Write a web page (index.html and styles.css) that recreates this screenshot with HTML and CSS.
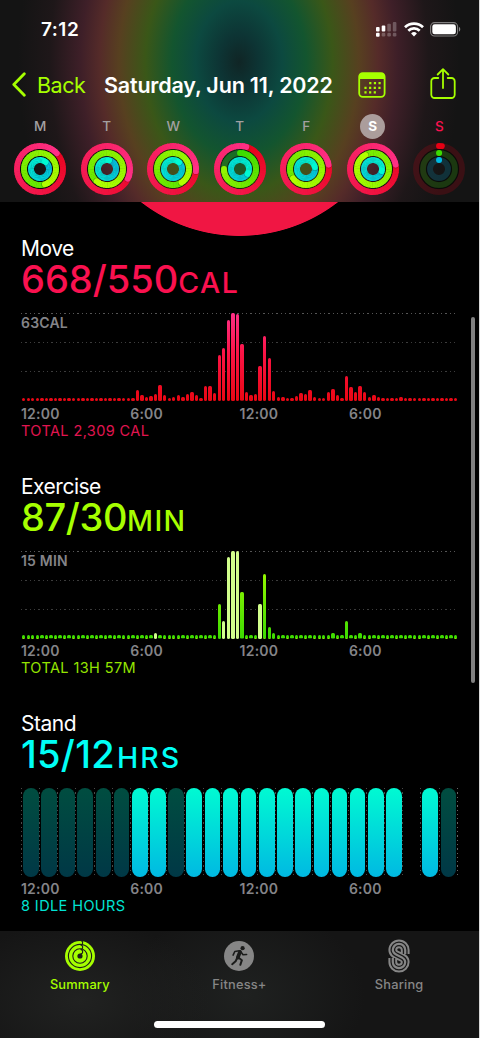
FILE: index.html
```html
<!DOCTYPE html>
<html lang="en">
<head>
    <meta charset="UTF-8">
    <meta name="viewport" content="width=device-width, initial-scale=1.0">
    <title>Activity</title>
    <link rel="stylesheet" href="styles.css">
</head>
<body>
<div class="phone">
    <header class="header">
        <div class="status">
            <span class="time">7:12</span>
            <div class="status-icons">
                <svg class="signal" width="21" height="15" viewBox="0 0 21 15" fill="#fff">
                    <rect x="0" y="5" width="3.6" height="4.4" rx="1"/>
                    <rect x="5.7" y="3.6" width="3.6" height="5.8" rx="1"/>
                    <rect x="11.3" y="1.8" width="3.6" height="7.6" rx="1" opacity=".25"/>
                    <rect x="16.8" y="0" width="3.6" height="9.4" rx="1" opacity=".25"/>
                    <rect x="0" y="10.8" width="3.6" height="4" rx="1"/>
                    <rect x="5.7" y="10.8" width="3.6" height="3.6" rx="1.2" opacity=".25"/>
                    <rect x="11.3" y="10.8" width="3.6" height="3.6" rx="1.2" opacity=".25"/>
                    <rect x="16.8" y="10.8" width="3.6" height="3.6" rx="1.2" opacity=".25"/>
                </svg>
                <svg class="wifi" width="20" height="15" viewBox="0 0 20 15" fill="none" stroke="#fff" stroke-width="2.7">
                    <path d="M1 5.3a12.8 12.8 0 0 1 18 0"/>
                    <path d="M4.3 8.8a8 8 0 0 1 11.4 0"/>
                    <path d="M10 14.4l-2.9-2.9a4.1 4.1 0 0 1 5.8 0z" fill="#fff" stroke="none"/>
                </svg>
                <svg width="32" height="15" viewBox="0 0 32 15">
                    <rect x=".6" y=".6" width="27" height="13.4" rx="4" fill="none" stroke="#fff" stroke-opacity=".45" stroke-width="1.1"/>
                    <rect x="2.3" y="2.3" width="23.6" height="10" rx="2.4" fill="#fff"/>
                    <path d="M29 5v4.600c1.700-.7 1.700-3.900 0-4.600z" fill="#fff" opacity=".5"/>
                </svg>
            </div>
        </div>
        <nav class="navbar">
            <a class="back">
                <svg width="14" height="25" viewBox="0 0 14 25" fill="none" stroke="#a6ff00" stroke-width="2.8" stroke-linecap="round" stroke-linejoin="round"><path d="M12.300 1.800L1.800 12.500l10.500 10.700"/></svg>
                <span>Back</span>
            </a>
            <h1 class="date">Saturday, Jun 11, 2022</h1>
            <svg class="calendar" width="28" height="26" viewBox="0 0 28 26">
                <rect x="1.200" y="1.200" width="25.400" height="23.600" rx="3.600" fill="none" stroke="#a6ff00" stroke-width="1.800"/>
                <path d="M1 7V4.500A3.600 3.600 0 0 1 4.600 1h18.600a3.600 3.600 0 0 1 3.600 3.500V7z" fill="#a6ff00"/>
                <g stroke="#a6ff00" stroke-width="2.200" stroke-dasharray="2.200 2.450">
                    <path d="M11.200 11.200h11.600M6.400 15.800h16.200M6.400 20.300h11.700"/>
                </g>
            </svg>
            <svg class="share" width="26" height="32" viewBox="0 0 26 32" fill="none" stroke="#a6ff00" stroke-width="1.800" stroke-linecap="round" stroke-linejoin="round">
                <path d="M8.300 10H4.600A3.300 3.300 0 0 0 1.300 13.300v13.400A3.300 3.300 0 0 0 4.600 30h16.800a3.300 3.300 0 0 0 3.300-3.300V13.300A3.300 3.300 0 0 0 21.400 10h-3.700"/>
                <path d="M13 20V1.500M7.700 6.500L13 1.200l5.300 5.300"/>
            </svg>
        </nav>
        <div class="week" id="week"></div>
    </header>

    <main class="content">
        <div class="big-ring"></div>

        <section class="metric move">
            <h2>Move</h2>
            <p class="value">668/550<span>CAL</span></p>
            <div class="chart grid"><span class="scale">63CAL</span><div class="bars" id="move"></div></div>
            <div class="axis"><span>12:00</span><span>6:00</span><span>12:00</span><span>6:00</span></div>
            <p class="total">TOTAL 2,309 CAL</p>
        </section>

        <section class="metric exercise">
            <h2>Exercise</h2>
            <p class="value">87/30<span>MIN</span></p>
            <div class="chart grid"><span class="scale">15 MIN</span><div class="bars" id="exercise"></div></div>
            <div class="axis"><span>12:00</span><span>6:00</span><span>12:00</span><span>6:00</span></div>
            <p class="total">TOTAL 13H 57M</p>
        </section>

        <section class="metric stand">
            <h2>Stand</h2>
            <p class="value">15/12<span>HRS</span></p>
            <div class="chart hours" id="stand"></div>
            <div class="axis"><span>12:00</span><span>6:00</span><span>12:00</span><span>6:00</span></div>
            <p class="total">8 IDLE HOURS</p>
        </section>
    </main>
    <div class="scrollbar"></div>

    <footer class="tabbar">
        <div class="tabs">
            <a class="tab active">
                <svg width="34" height="34" viewBox="0 0 34 34">
                    <circle cx="17" cy="17" r="15" fill="#a6ff00"/>
                    <g fill="none" stroke="#1c1e1b" stroke-width="1.1">
                        <circle cx="17" cy="17" r="11.600"/>
                        <circle cx="17" cy="17" r="7.200"/>
                        <path d="M17.500 1.500a2 2 0 0 1 0 4.300M17.500 6a2 2 0 0 1 0 4.300M17.500 10.500a2 2 0 0 1 0 4.300"/>
                    </g>
                    <circle cx="17" cy="17" r="2.600" fill="#1c1e1b"/>
                </svg>
                <span>Summary</span>
            </a>
            <a class="tab">
                <svg width="34" height="34" viewBox="0 0 34 34">
                    <circle cx="17" cy="17" r="15" fill="#868686"/>
                    <circle cx="20.600" cy="9.200" r="2.100" fill="#1b1c1b"/>
                    <g fill="none" stroke="#1b1c1b" stroke-linecap="round" stroke-linejoin="round">
                        <path d="M18 12.800l-2.200 5.700" stroke-width="3.700"/>
                        <path d="M17.300 11.800l-4.500.7-1.700 3.600M19 13l2 2.700 3.600-.2" stroke-width="1.600"/>
                        <path d="M16.600 18.700l3.300 2.500-1.600 4.600M15.300 18.800l-1.700 3.500-3.400 2.900" stroke-width="2"/>
                    </g>
                </svg>
                <span>Fitness+</span>
            </a>
            <a class="tab">
                <svg width="34" height="34" viewBox="0 0 34 34">
                    <g transform="translate(6.500 .5)" fill="none">
                        <path d="M16.700 14.500V10.500A6.200 6.200 0 0 0 4.300 10.500C4.300 17.500 16.700 15.500 16.700 22.500A6.200 6.200 0 0 1 4.300 22.500V18.500" stroke="#868686" stroke-width="8.800"/>
                        <path d="M16.700 14.500V10.500A6.200 6.200 0 0 0 4.300 10.500C4.300 17.500 16.700 15.500 16.700 22.500A6.200 6.200 0 0 1 4.300 22.500V18.500" stroke="#191919" stroke-width="4.800"/>
                        <path d="M16.700 14.500V10.500A6.200 6.200 0 0 0 4.300 10.500C4.300 17.500 16.700 15.500 16.700 22.500A6.200 6.200 0 0 1 4.300 22.500V18.500" stroke="#868686" stroke-width="2.200"/>
                    </g>
                </svg>
                <span>Sharing</span>
            </a>
        </div>
        <div class="home"></div>
    </footer>
</div>
<script src="script.js"></script>
</body>
</html>
```
FILE: styles.css
```css
*{
    box-sizing: border-box;
}
body{
    margin: 0;
    background-color: #d8d8d8;
    font-family: Inter, "Liberation Sans", sans-serif;
}
h1, h2, p{
    margin: 0;
    white-space: nowrap;
}
svg{
    display: block;
    flex-shrink: 0;
}
.phone{
    position: relative;
    width: 479px;
    height: 1038px;
    display: flex;
    flex-direction: column;
    overflow: hidden;
    background-color: #000;
}

/* header */
.header{
    height: 202px;
    flex-shrink: 0;
    background: radial-gradient(ellipse 240px 336px at 239px 62px, #102525 0, #0d3434 8%, #0c4940 18%, #13552f 28%, #3a5718 39%, #574020 50%, #552b29 58%, #3e1f28 66%, #1e1719 79%, #141414 92%);
}
.status{
    height: 60px;
    display: flex;
    justify-content: space-between;
    padding: 0 17px 0 41px;
    color: #fff;
}
.time{
    font-size: 19px;
    line-height: 23px;
    font-weight: 600;
    letter-spacing: 0.5px;
    padding-top: 18px;
}
.status-icons{
    display: flex;
    padding-top: 22px;
}
.wifi{
    margin: 0 6px 0 7px;
}
.navbar{
    height: 50px;
    display: flex;
    align-items: center;
    padding: 0 0 1px 12px;
    color: #a6ff00;
}
.back{
    width: 92px;
    display: flex;
    align-items: center;
    gap: 11px;
    font-size: 21.5px;
    letter-spacing: -0.5px;
}
.date{
    width: 254px;
    color: #fff;
    font-size: 21.5px;
    font-weight: 600;
    letter-spacing: -0.18px;
}
.calendar{
    margin-right: 44px;
}
.share{
    margin-top: -1px;
}
.week{
    display: flex;
    padding: 4px 6px 0 7px;
}
.day{
    width: 66.5px;
    display: flex;
    flex-direction: column;
    align-items: center;
    gap: 3px;
    font-size: 13.5px;
    font-weight: 500;
    color: #a3a0a1;
}
.day span{
    width: 25px;
    height: 25px;
    line-height: 25px;
    border-radius: 50%;
    text-align: center;
}
.day .selected{
    background-color: #ab9d9c;
    color: #fff;
    font-weight: 700;
}
.day .today{
    color: #fa114f;
}

/* metrics */
.content{
    height: 729px;
    flex-shrink: 0;
    overflow: hidden;
}
.big-ring{
    height: 34px;
    background: radial-gradient(circle at 239.500px -126.500px, #f01643 160px, transparent 160.800px);
}
.metric{
    height: 237.700px;
    padding-left: 21px;
}
.metric h2{
    color: #fff;
    font-size: 21px;
    line-height: 25px;
    font-weight: 400;
    letter-spacing: -0.5px;
}
.value{
    height: 52px;
    font-size: 38px;
    line-height: 37px;
    font-weight: 500;
    letter-spacing: 0;
}
.value span{
    font-size: 28.500px;
    letter-spacing: 1.400px;
}
.move .value{
    color: #fa114f;
}
.exercise .value{
    color: #a6ff00;
    letter-spacing: -0.400px;
}
.stand .value{
    color: #00fff6;
    letter-spacing: 0.300px;
}
.stand .value span{
    margin-left: 2px;
    letter-spacing: 2px;
}
.chart{
    width: 437px;
    height: 88.500px;
}
.grid{
    display: grid;
    height: 88px;
    margin-bottom: 0.500px;
    background:
        repeating-linear-gradient(90deg, #555 0 1.300px, transparent 1.300px 4.330px) 0 0 / 100% 1px no-repeat,
        repeating-linear-gradient(90deg, #3c3c3c 0 1.300px, transparent 1.300px 4.330px) 0 29px / 100% 1px no-repeat,
        repeating-linear-gradient(90deg, #3c3c3c 0 1.300px, transparent 1.300px 4.330px) 0 58px / 100% 1px no-repeat;
}
.scale, .bars{
    grid-area: 1 / 1;
}
.scale{
    padding-top: 1px;
    font-size: 14px;
    line-height: 17px;
    font-weight: 600;
    letter-spacing: 0.2px;
    color: #848488;
}
.bars{
    display: flex;
    align-items: flex-end;
    gap: 1.160px;
    padding-left: 1px;
}
.bar{
    width: 3.400px;
    flex-shrink: 0;
    border-radius: 1.500px;
    background: linear-gradient(0deg, #ea0713, #fb1446 55%, #ff2f86) 0 100% / 100% 88px;
}
.exercise .bar{
    background-image: linear-gradient(0deg, #3cdc00, #b2ff00);
}
.exercise .bar.pale{
    background: #d2ff8c;
}
.axis{
    display: grid;
    grid-template-columns: repeat(4, 109.300px);
    padding-top: 3px;
    font-size: 14px;
    line-height: 17px;
    font-weight: 600;
    letter-spacing: 0.2px;
    color: #848488;
}
.total{
    font-size: 14.500px;
    line-height: 18px;
    letter-spacing: 0.400px;
}
.move .total{
    color: #e01550;
}
.exercise .total{
    color: #94e400;
}
.stand .total{
    color: #00e3d4;
}
.hours{
    display: flex;
}
.hour{
    width: 18.160px;
    flex-shrink: 0;
    padding: 0 .600px 0 2px;
    background: repeating-linear-gradient(#4a4a4a 0 1.300px, transparent 1.300px 4.300px) 0 0 / 1px 100% no-repeat;
}
.hour:last-child{
    width: 19px;
    padding-right: 1.500px;
    background: repeating-linear-gradient(#4a4a4a 0 1.300px, transparent 1.300px 4.300px) 0 0 / 1px 100% no-repeat,
        repeating-linear-gradient(#666 0 1.300px, transparent 1.300px 4.300px) 100% 0 / 1px 100% no-repeat;
}
.pill{
    height: 100%;
    border-radius: 8px;
}
.pill.on{
    background: linear-gradient(#00fad2, #00b9e2);
}
.pill.idle{
    background: linear-gradient(#004d40, #003846);
}
.scrollbar{
    position: absolute;
    top: 317px;
    right: 4px;
    width: 4px;
    height: 366px;
    border-radius: 2px;
    background-color: #808080;
}

/* tab bar */
.tabbar{
    height: 107px;
    flex-shrink: 0;
    background:
        radial-gradient(ellipse 130px 80px at 80px 65%, #212221, transparent),
        radial-gradient(ellipse 120px 90px at 245px 60%, #1f2120, transparent),
        #151515;
}
.tabs{
    height: 90px;
    display: flex;
    padding-top: 8px;
}
.tab{
    width: 33.333%;
    display: flex;
    flex-direction: column;
    align-items: center;
    gap: 3px;
    font-size: 12.800px;
    line-height: 17px;
    font-weight: 500;
    letter-spacing: 0.200px;
    color: #868686;
}
.tab.active{
    color: #a6ff00;
}
.home{
    width: 171px;
    height: 7px;
    margin: 0 auto;
    border-radius: 4px;
    background-color: #fff;
}
```
FILE: script.js
```js
// laps: position of the ring head, 1 = one full turn
const days = [
    { name: 'M', laps: [1.13, 1.45, 1.11] },
    { name: 'T', laps: [1.32, 1.61, 1.04] },
    { name: 'W', laps: [1.265, 1.41, 1.12] },
    { name: 'T', laps: [1.045, 0.75, 1.34] },
    { name: 'F', laps: [1.22, 1.65, 1.22] },
    { name: 'S', cls: 'selected', laps: [1.22, 1.92, 1.29] },
    { name: 'S', cls: 'today', laps: [0.02, 0.002, 0.002] }
];
const rings = [
    { r: 23, from: [232, 0, 20], to: [255, 48, 135] },
    { r: 16, from: [60, 220, 0], to: [178, 255, 0] },
    { r: 9, from: [0, 185, 226], to: [0, 250, 210] }
];

function point(r, turn) {
    const a = turn * Math.PI * 2;
    return (27 + r * Math.sin(a)).toFixed(2) + ' ' + (27 - r * Math.cos(a)).toFixed(2);
}

function mix(a, b, t) {
    return 'rgb(' + a.map((v, i) => Math.round(v + (b[i] - v) * t)).join(',') + ')';
}

function drawRing(ring, lap) {
    let out = `<circle cx="27" cy="27" r="${ring.r}" stroke="rgb(${ring.from})" stroke-opacity=".18"/>`;
    const start = Math.max(0, lap - 1);
    const steps = Math.max(1, Math.round((lap - start) * 60));
    const step = (lap - start) / steps;
    for (let i = 0; i < steps; i++) {
        const t = start + step * i;
        // darker edge just under the head
        if (i === steps - 1 && lap > 1) {
            out += `<path d="M${point(ring.r, lap)}L${point(ring.r, lap + 0.12 / ring.r)}" stroke="#000" stroke-opacity=".2" stroke-linecap="round"/>`;
        }
        const cap = i === 0 && lap < 1 || i === steps - 1 ? 'round' : 'butt';
        const over = i === steps - 1 ? 0 : 0.004;
        out += `<path d="M${point(ring.r, t)}A${ring.r} ${ring.r} 0 0 1 ${point(ring.r, t + step + over)}" stroke="${mix(ring.from, ring.to, t / Math.max(lap, 1))}" stroke-linecap="${cap}"/>`;
    }
    return out;
}

// dark gaps between the rings
const gaps = '<g stroke="#000" stroke-opacity=".5" stroke-width="1.3"><circle cx="27" cy="27" r="19.5"/><circle cx="27" cy="27" r="12.5"/></g>';

document.getElementById('week').innerHTML = days.map(d =>
    `<div class="day"><span class="${d.cls || ''}">${d.name}</span>
    <svg width="54" height="54" viewBox="0 0 54 54" fill="none" stroke-width="5.9">
    ${gaps}${rings.map((ring, i) => drawRing(ring, d.laps[i])).join('')}</svg></div>`).join('');

// one bar for each quarter of an hour
const rest = n => Array(n).fill(3.3);
const move = [...rest(25), 11.3, 6.3, 4.3, 5.5, 7.3, 16.3, 6.5, 3.5, 4.3, 6.3, 4.3, 7.3, 9.3, 6.5, 3.5,
    15, 15.5, 8.5, 46.5, 53.5, 81.5, 88, 87, 56.7, 9.3, 6, 7.3, 35.5, 65.5, 43, 10, 4.3, 4.3, 3.3, 3.3,
    5, 8.3, 7.3, 11.3, 4.3, 3.3, 3.3, 9.3, 12, 6, 3.3, 25, 14, 9.3, 15.3, 9.3, 4, 6.3, 4.3, ...rest(4), 4.3, ...rest(12)];
const exercise = rest(96);
Object.assign(exercise, { 29: 5.7, 43: 35, 44: 17.5, 45: 82, 46: 88, 47: 88, 48: 46.5, 52: 35, 53: 64.5,
    54: 11.5, 55: 6, 68: 5.5, 71: 17.5, 74: 5.5 });
const pale = [29, 44, 45, 46, 47, 52];

document.getElementById('move').innerHTML = move.map(h =>
    `<div class="bar" style="height:${h}px"></div>`).join('');
document.getElementById('exercise').innerHTML = exercise.map((h, i) =>
    `<div class="bar${pale.includes(i) ? ' pale' : ''}" style="height:${h}px"></div>`).join('');

// + stood, - idle, space no data
document.getElementById('stand').innerHTML = [...'------++-++++++++++++ +-'].map(c =>
    `<div class="hour"><div class="pill ${c === '+' ? 'on' : c === '-' ? 'idle' : ''}"></div></div>`).join('');
```
